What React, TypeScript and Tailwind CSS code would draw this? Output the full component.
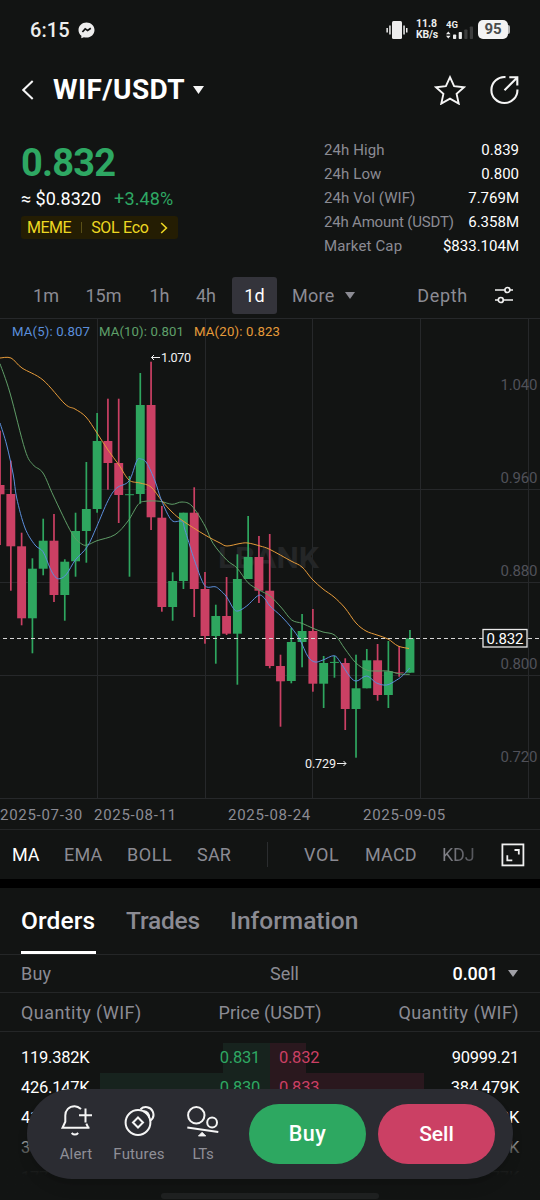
import { useState } from "react";

type Candle = [open: "g" | "r", top: number, bottom: number, high: number, low: number];

const STEP = 10.787;

// body top, body bottom, wick top, wick bottom
const candles: Candle[] = [
    ["r", 485, 494.3, 430.7, 545],
    ["r", 494, 546.3, 460.7, 590.7],
    ["r", 546.3, 618.3, 532.7, 625.3],
    ["g", 568.7, 618.3, 558.3, 653.3],
    ["g", 540.7, 568.7, 518.7, 575.3],
    ["r", 540.7, 595, 514, 602],
    ["g", 561.7, 595, 559.3, 620.7],
    ["g", 531, 561.3, 512.7, 576.7],
    ["g", 509, 531, 462, 562.7],
    ["g", 441, 509, 413, 512.7],
    ["r", 441, 463, 398.7, 489.7],
    ["r", 463, 495, 398.7, 523],
    ["g", 494.2, 495.2, 476, 576.7],
    ["g", 405, 494, 373, 503.7],
    ["r", 405, 517.3, 361.7, 530],
    ["r", 517.7, 607, 506, 611.7],
    ["g", 581, 607, 572.3, 620.7],
    ["g", 512.7, 581, 512.7, 589],
    ["r", 512.7, 589, 487.3, 617],
    ["r", 589, 636, 572, 643.7],
    ["g", 616, 636, 604.7, 663.7],
    ["r", 616, 633.7, 577, 635],
    ["g", 579, 633.7, 554.3, 684.7],
    ["g", 557, 579, 516, 579],
    ["r", 557, 590.7, 536, 603],
    ["r", 590.7, 666, 534, 668.3],
    ["r", 666, 681.3, 654.7, 726.7],
    ["g", 642, 681, 627.7, 683.3],
    ["g", 631, 642, 614, 667.3],
    ["r", 631, 683.7, 609, 691.7],
    ["g", 663, 683.7, 656, 708],
    ["g", 661.9, 662.9, 656, 677.7],
    ["r", 663, 709, 658.3, 730],
    ["g", 688.3, 709, 654.7, 757.7],
    ["g", 660.3, 688.3, 649, 688.3],
    ["r", 660.3, 695, 644, 700.7],
    ["g", 671.3, 695, 641, 708],
    ["r", 672.4, 673.2, 646, 676.7],
    ["g", 638.3, 672.7, 630, 672.7],
];

const ma5 =
    "0,423 6.7,445 13.3,475 16.7,498 25,528 35,545 43,551.7 50,568 55,576.7 60,578.7 66.7,574 75.3,560 87.3,546.7 96.7,526.7 108,500.7 116.7,488 129,481 136.7,461 141,459 146.7,463 155,481 161.7,501 171.7,520.3 182,521.3 185,530 193.3,556.7 201.7,580 206.7,587 215,586.7 220,590 226.7,597 233.3,608.3 238,611 246.7,606 258.7,595.3 265,599 270,606 281.7,616.7 291.7,628 300,640 308,656.7 315,662 323,660 334,655.7 340,661.7 350,676.7 356.7,681 366.7,676 376.7,683 386.7,685 396.7,680 403.3,675 409.7,668";
const ma10 =
    "0,363.7 10,393 25,449.7 33,464.7 43,473 53.5,496 71.7,533 81.7,544 88,544.7 97,540.7 115,534.7 128,521 138,504.7 145,501.3 160,501.3 172,504.3 182,502 192,506 205,526 213,543.3 226.7,560 237,568 248,582.7 259,590 270,596 281.7,608 291.7,620 302,623.3 313,628.3 323,632 335,635.3 345,649 355.7,662.7 366.7,670 377,671 388,671 400,674 409.7,674.3";
const ma20 =
    "0,358 11,358 22,368 43,380 65,404 75,409 86,417 97,433 108,450 119,465 129,480 140,483 151,487 162,501 172,512 183,521 205,535 220,543 227,546 240,543.5 248,543 260,546 270,549.5 291,561 302,567 312,579 323,589 334,597 345,608 356,623 366,631 377,635 388,639 398,646 409,648.5";

// Catmull-Rom through the points, written as cubic beziers
function smooth(points: string) {
    const p = points.split(" ").map((s) => s.split(",").map(Number));
    let d = `M${p[0][0]} ${p[0][1]}`;
    for (let i = 0; i < p.length - 1; i++) {
        const a = p[i - 1] ?? p[i];
        const b = p[i];
        const c = p[i + 1];
        const e = p[i + 2] ?? c;
        d += ` C${b[0] + (c[0] - a[0]) / 6} ${b[1] + (c[1] - a[1]) / 6} ${c[0] - (e[0] - b[0]) / 6} ${c[1] - (e[1] - b[1]) / 6} ${c[0]} ${c[1]}`;
    }
    return d;
}

const stats = [
    { label: "24h High", value: "0.839", spacing: "tracking-[0.1px]" },
    { label: "24h Low", value: "0.800", spacing: "tracking-[0.1px]" },
    { label: "24h Vol (WIF)", value: "7.769M", spacing: "tracking-[0.1px]" },
    { label: "24h Amount (USDT)", value: "6.358M", spacing: "tracking-[-0.2px]" },
    { label: "Market Cap", value: "$833.104M", spacing: "tracking-[0.15px]" },
];

const axis = [
    { y: 390, label: "1.040" },
    { y: 483, label: "0.960" },
    { y: 576, label: "0.880" },
    { y: 669, label: "0.800" },
    { y: 762, label: "0.720" },
];

const orders = [
    { buyQty: "119.382K", buy: "0.831", buyBar: 47, sell: "0.832", sellBar: 36, sellQty: "90999.21" },
    { buyQty: "426.147K", buy: "0.830", buyBar: 170, sell: "0.833", sellBar: 154, sellQty: "384.479K" },
    { buyQty: "417K", buy: "", buyBar: 160, sell: "", sellBar: 150, sellQty: "402K" },
    { buyQty: "386K", buy: "", buyBar: 150, sell: "", sellBar: 140, sellQty: "365K" },
    { buyQty: "177", buy: "", buyBar: 70, sell: "", sellBar: 90, sellQty: "777K" },
];

function StatusBar() {
    return (
        <div className="flex h-[60px] items-center justify-between pl-[30px] pr-[30px]">
            <div className="flex items-center gap-2">
                <span className="text-[20px] font-medium leading-none tracking-[0.1px] text-[#ededed]">6:15</span>
                <svg width="17" height="17" viewBox="0 0 17 17">
                    <path d="M8.5 .5C4 .5 .5 3.8 .5 8c0 2.4 1.1 4.4 2.9 5.8L3.3 16.3l2.6-1.1c.8.2 1.7.4 2.6.4 4.5 0 8-3.3 8-7.6S13 .5 8.5 .5Z" fill="#ededed" />
                    <path d="M4.4 10 7.2 6.9l2.4 1.6L12.8 6.2" fill="none" stroke="#121413" strokeWidth="1.7" />
                </svg>
            </div>
            <div className="-mt-px flex items-center">
                <svg width="22" height="20" viewBox="0 0 22 20" fill="#ededed">
                    <rect x="6" y="1" width="10" height="18" rx="1.5" />
                    <rect x="3.2" y="5.5" width="1.5" height="9" />
                    <rect x=".4" y="8" width="1.5" height="4.5" />
                    <rect x="17.3" y="5.5" width="1.5" height="9" />
                    <rect x="20" y="8" width="1.5" height="4.5" />
                </svg>
                <div className="ml-2 flex w-[22px] flex-col items-start whitespace-nowrap text-[10.5px] font-bold leading-[10.5px] text-[#ededed]">
                    <span>11.8</span>
                    <span className="tracking-[-0.2px]">KB/s</span>
                </div>
                <svg className="ml-[8px]" width="28" height="20" viewBox="0 0 28 20">
                    <text x="0" y="8" fontSize="9.5" fontWeight="700" fill="#ededed">4G</text>
                    <path d="M0 14.2 2.3 11.5 4.6 14.2ZM0 15.8 2.3 18.5 4.6 15.8Z" fill="#ededed" />
                    <rect x="7" y="14.5" width="3.2" height="4.5" rx=".8" fill="#ededed" />
                    <rect x="12.7" y="12" width="3.2" height="7" rx=".8" fill="#ededed" />
                    <rect x="18.3" y="9.5" width="3.2" height="9.5" rx=".8" fill="#3c3d3d" />
                    <rect x="23.8" y="6.5" width="3.2" height="12.5" rx=".8" fill="#3c3d3d" />
                </svg>
                <div className="ml-[4px] flex h-[19px] w-[30px] items-center justify-center rounded-[5px] bg-[#f3f3f3] text-[15px] font-bold leading-none text-[#4a4c4b]">
                    95
                </div>
                <div className="h-[9px] w-[2px] rounded-r bg-[#b5b5b5]" />
            </div>
        </div>
    );
}

function Header() {
    return (
        <div className="flex h-[60px] items-center pl-[22px] pr-[21px]">
            <svg width="12" height="20" viewBox="0 0 12 20" fill="none" stroke="#f5f5f5" strokeWidth="2">
                <path d="M10.7 1 1.3 10l9.4 9" />
            </svg>
            <h1 className="ml-[19px] text-[28px] font-bold leading-none tracking-[0.4px] text-white">WIF/USDT</h1>
            <svg className="ml-[8px]" width="11" height="8" viewBox="0 0 11 8" fill="#f5f5f5">
                <path d="M0 0h11L5.5 8Z" />
            </svg>
            <svg className="ml-auto" width="32" height="30" viewBox="0 0 32 30" fill="none" stroke="#f5f5f5" strokeWidth="1.9">
                <path d="M16 2.2l4.1 9 9.9 1-7.4 6.7 2.1 9.7L16 23.6l-8.7 5 2.1-9.7L2 12.2l9.9-1Z" />
            </svg>
            <svg className="ml-[24px]" width="29" height="30" viewBox="0 0 29 30" fill="none" stroke="#f5f5f5" strokeWidth="2.1">
                <path d="M15.5 2.1A13 13 0 1 0 27.4 14.5" />
                <path d="M14.5 15.2 27 2.7M19.3 2.2h8v8.3" />
            </svg>
        </div>
    );
}

function Summary() {
    return (
        <div className="flex h-[154px] justify-between pl-[21px] pr-[21px]">
            <div className="pt-[22px]">
                <div className="text-[38px] font-bold leading-[42px] tracking-[-0.8px] text-[#2ea863]">0.832</div>
                <div className="mt-[4px] flex text-[18px] leading-[22px]">
                    <span className="text-white">≈ $0.8320</span>
                    <span className="ml-[13px] tracking-[0.15px] text-[#2ea863]">+3.48%</span>
                </div>
                <div className="mt-[6px] flex h-[23px] w-[157px] items-center whitespace-nowrap rounded-[3px] bg-[#241d03] pl-[6px] text-[16px] text-[#ecd722]">
                    <span className="tracking-[-0.5px]">MEME</span>
                    <span className="ml-[10px] mr-[9px] h-[11px] w-px bg-[#5a5017]" />
                    <span className="tracking-[-0.3px]">SOL Eco</span>
                    <svg className="ml-[11px]" width="8" height="12" viewBox="0 0 8 12" fill="none" stroke="#ecd722" strokeWidth="1.6">
                        <path d="M1.2 1 6.4 6l-5.2 5" />
                    </svg>
                </div>
            </div>
            <div className="w-[195px] pt-[18px]">
                {stats.map((s) => (
                    <div key={s.label} className="flex h-6 items-center justify-between whitespace-nowrap text-[15px]">
                        <span className={`text-[#8b8b93] ${s.spacing}`}>{s.label}</span>
                        <span className="text-white">{s.value}</span>
                    </div>
                ))}
            </div>
        </div>
    );
}

function Timeframes() {
    const [active, setActive] = useState("1d");
    return (
        <div className="flex h-[44px] items-center pb-[2px] pl-[24px] pr-[26px] text-[18px] text-[#8b8b93]">
            {[
                { id: "1m", w: "w-[44px]" },
                { id: "15m", w: "w-[71px]" },
                { id: "1h", w: "w-[41px]" },
                { id: "4h", w: "w-[52px]" },
                { id: "1d", w: "w-[45px]" },
            ].map((t) => (
                <button
                    key={t.id}
                    onClick={() => setActive(t.id)}
                    className={`h-[37px] rounded-[3px] ${t.w} ${active === t.id ? "bg-[#34343b] text-white" : ""}`}
                >
                    {t.id}
                </button>
            ))}
            <span className="ml-[15px] tracking-[0.3px]">More</span>
            <svg className="ml-[10px]" width="10" height="7" viewBox="0 0 10 7" fill="#8b8b93">
                <path d="M0 0h10L5 7Z" />
            </svg>
            <span className="ml-auto tracking-[0.7px]">Depth</span>
            <svg className="ml-[26px]" width="20" height="18" viewBox="0 0 20 18" fill="none" stroke="#f0f0f0" strokeWidth="1.7">
                <path d="M1 4h9.8M16 4h3M1 14h3.3M9.3 14H19" />
                <circle cx="13.4" cy="4" r="2.5" />
                <circle cx="6.8" cy="14" r="2.5" />
            </svg>
        </div>
    );
}

function Chart() {
    return (
        <svg className="block h-[481px] w-[540px]" viewBox="0 318 540 481">
            <g stroke="#26282a" strokeWidth="1">
                {[97.5, 205.5, 312.5, 420.5, 528.5].map((x) => (
                    <path key={x} d={`M${x} 318V798`} />
                ))}
                {[318.5, 489.5, 582.5, 675.5, 798.5].map((y) => (
                    <path key={y} d={`M0 ${y}H540`} />
                ))}
            </g>
            <text x="218" y="568" fontSize="29" fontWeight="700" fill="#242627" textLength="101" lengthAdjust="spacingAndGlyphs">
                LBANK
            </text>
            {candles.map(([c, top, bottom, high, low], i) => {
                const fill = c === "g" ? "#2ea65f" : "#cb4064";
                return (
                    <g key={i} fill={fill}>
                        <rect x={i * STEP - 0.8} y={high} width="1.7" height={low - high} />
                        <rect x={i * STEP - 4.4} y={top} width="8.9" height={bottom - top} />
                    </g>
                );
            })}
            <g fill="none" strokeWidth="1">
                <path d={smooth(ma10)} stroke="#5f9d67" />
                <path d={smooth(ma20)} stroke="#e69b3a" />
                <path d={smooth(ma5)} stroke="#5b8fdc" />
            </g>
            <path d="M3 638.5H540" stroke="#d6d6d6" strokeWidth="1" strokeDasharray="4 3" />
            <g fontSize="13.2">
                <text x="12" y="336" fill="#5b8fdc" textLength="78">MA(5): 0.807</text>
                <text x="99" y="336" fill="#5fa06a" textLength="85">MA(10): 0.801</text>
                <text x="194" y="336" fill="#e69b3a" textLength="86">MA(20): 0.823</text>
            </g>
            <g fontSize="12.6" fill="#f0f0f0">
                <text x="161" y="362" textLength="30">1.070</text>
                <text x="305" y="768" textLength="31">0.729</text>
            </g>
            <g stroke="#f0f0f0" strokeWidth="1" fill="none">
                <path d="M151.5 357.5H160M154 355l-2.5 2.5 2.5 2.5M337 763.5H346M343.5 761l2.5 2.5-2.5 2.5" />
            </g>
            <g fontSize="15" fill="#505159">
                {axis.map((a) => (
                    <text key={a.label} x="500.5" y={a.y} textLength="37">{a.label}</text>
                ))}
            </g>
            <rect x="483" y="629.5" width="44" height="17.5" fill="#121413" stroke="#e8e8e8" strokeWidth="1.3" />
            <text x="486.5" y="643.5" fontSize="15" fill="#fff" textLength="37">0.832</text>
        </svg>
    );
}

function Dates() {
    return (
        <div className="flex h-[31px] items-center whitespace-nowrap border-b border-[#242627] pt-[2px] text-[15px] tracking-[0.72px] text-[#8b8b93]">
            <span className="w-[94px]">2025-07-30</span>
            <span className="w-[134px]">2025-08-11</span>
            <span className="w-[135px]">2025-08-24</span>
            <span>2025-09-05</span>
        </div>
    );
}

function Indicators() {
    return (
        <div className="flex h-[49px] items-center whitespace-nowrap text-[18px] text-[#8b8b93]">
            <span className="w-[52px] pl-[12px] text-white">MA</span>
            <span className="ml-[12px] w-[63px] tracking-[0.2px]">EMA</span>
            <span className="w-[70px] tracking-[0.6px]">BOLL</span>
            <span className="w-[70px] tracking-[0.2px]">SAR</span>
            <span className="h-[25px] w-px bg-[#2b2d2f]" />
            <span className="ml-[36px] w-[61px] tracking-[0.6px]">VOL</span>
            <span className="w-[77px] tracking-[0.2px]">MACD</span>
            <span className="w-[59px] bg-gradient-to-r from-[#85858c] to-[#303236] bg-clip-text tracking-[-0.2px] text-transparent">KDJ</span>
            <svg width="24" height="24" viewBox="0 0 24 24" fill="none" stroke="#f0f0f0" strokeWidth="1.8">
                <rect x="1.4" y="1.4" width="21" height="21" />
                <path d="M13.5 7h4.3v4.6M6.3 12.2v5.2h5" />
            </svg>
        </div>
    );
}

function OrderBook() {
    return (
        <div className="relative h-[312px]">
            <div className="flex h-[67px] items-stretch border-b border-[#242627] pl-[21px] text-[24.5px] font-medium text-[#8b8b93]">
                <div className="flex w-[75px] items-center whitespace-nowrap border-b-[3px] border-white pt-[3px] tracking-[0.1px] text-white">Orders</div>
                <div className="ml-[30px] flex w-[104px] items-center tracking-[-0.2px]">Trades</div>
                <div className="flex items-center">Information</div>
            </div>
            <div className="grid h-[38px] grid-cols-3 items-center border-b border-[#242627] px-[21px] text-[18px] text-[#8b8b93]">
                <span className="tracking-[0.2px]">Buy</span>
                <span className="pl-[83px]">Sell</span>
                <span className="flex items-center justify-end gap-[10px] pr-px">
                    <span className="font-medium tracking-[-0.1px] text-white">0.001</span>
                    <svg width="10" height="7" viewBox="0 0 10 7" fill="#a0a0a6">
                        <path d="M0 0h10L5 7Z" />
                    </svg>
                </span>
            </div>
            <div className="flex h-[39px] items-center justify-between border-b border-[#242627] px-[21px] text-[18px] text-[#8b8b93]">
                <span className="tracking-[0.43px]">Quantity (WIF)</span>
                <span className="tracking-[0.05px]">Price (USDT)</span>
                <span className="tracking-[0.43px]">Quantity (WIF)</span>
            </div>
            <div className="pt-[11px] text-[16.5px] tracking-[-0.25px]">
                {orders.map((o) => (
                    <div key={o.buyQty} className="flex h-[30px]">
                        <div className="relative flex w-1/2 items-center justify-between pl-[21px] pr-[10px] pt-px">
                            <div className="absolute inset-y-0 right-0 bg-[#17231e]" style={{ width: o.buyBar }} />
                            <span className="relative text-white">{o.buyQty}</span>
                            <span className="relative text-[#2ea863]">{o.buy}</span>
                        </div>
                        <div className="relative flex w-1/2 items-center justify-between pl-[9px] pr-[21px] pt-px">
                            <div className="absolute inset-y-0 left-0 bg-[#2a181e]" style={{ width: o.sellBar }} />
                            <span className="relative text-[#cb4064]">{o.sell}</span>
                            <span className="relative text-white">{o.sellQty}</span>
                        </div>
                    </div>
                ))}
            </div>
            <div className="absolute inset-x-0 bottom-0 h-[76px] bg-gradient-to-b from-transparent via-[#121413]/85 via-45% to-[#121413] to-68%" />
        </div>
    );
}

function ActionBar() {
    return (
        <div className="absolute left-[27px] top-[1089px] flex h-[90px] w-[486px] items-center rounded-full bg-[#2b2c32] pl-[20px] pr-[18px] text-[15px] text-[#8f8f97] shadow-lg">
            <button className="flex w-[58px] flex-col items-center">
                <svg width="34" height="32" viewBox="0 0 34 32" fill="none" stroke="#f5f5f5" strokeWidth="2">
                    <path d="M22 4C19.7 2 17.8 1.2 15.7 1.2 10 1.2 6.3 5.2 6.3 10.5v6.2L3.5 22.8h27M27.3 18.6l2 4.2" />
                    <path d="M26.5 3.5v14M20 10.2h13M12.6 28c2 1.9 4.6 1.9 6.6 0" />
                </svg>
                <span className="mt-[7px] leading-[20px] tracking-[0.2px]">Alert</span>
            </button>
            <button className="ml-[5px] flex w-[58px] flex-col items-center">
                <svg width="32" height="32" viewBox="0 0 32 32" fill="none" stroke="#f5f5f5" strokeWidth="2">
                    <circle cx="15" cy="17.5" r="12.4" />
                    <path d="M15 12.5l5 5-5 5-5-5Z" />
                    <path d="M17.5 4.2C21.2.8 27.6 1.6 29.8 6.6c1.4 3.6.2 7.3-2.8 9.2" />
                    <path d="M20.5 6.2C23.6 5.8 26.6 9.3 26 12.6" />
                </svg>
                <span className="mt-[7px] leading-[20px] tracking-[0.15px]">Futures</span>
            </button>
            <button className="ml-[6px] flex w-[58px] flex-col items-center">
                <svg width="34" height="32" viewBox="0 0 34 32" fill="none" stroke="#f5f5f5" strokeWidth="2">
                    <circle cx="10.3" cy="10.3" r="8.2" />
                    <circle cx="26.1" cy="17.5" r="4.9" />
                    <path d="M1.3 22.4 32.3 27" />
                    <path d="M16.1 27.2 19.8 31h-7.4Z" fill="#f5f5f5" strokeWidth=".8" />
                </svg>
                <span className="mt-[7px] leading-[20px] tracking-[-0.3px]">LTs</span>
            </button>
            <button className="ml-auto h-[60px] w-[117px] rounded-full bg-[#2da861] pt-px text-[21.5px] font-medium tracking-[0.4px] text-white">Buy</button>
            <button className="ml-[12px] h-[60px] w-[117px] rounded-full bg-[#cb4064] pt-px text-[21px] font-medium text-white">Sell</button>
        </div>
    );
}

export default function App() {
    return (
        <div className="relative h-[1200px] w-[540px] overflow-hidden bg-[#121413] font-[Roboto,'Noto_Sans',sans-serif]">
            <StatusBar />
            <Header />
            <Summary />
            <Timeframes />
            <Chart />
            <Dates />
            <Indicators />
            <div className="h-[9px] bg-black" />
            <OrderBook />
            <ActionBar />
            <div className="absolute left-[161px] top-[1193px] h-[6px] w-[218px] rounded-full bg-[#1e2020]" />
        </div>
    );
}
